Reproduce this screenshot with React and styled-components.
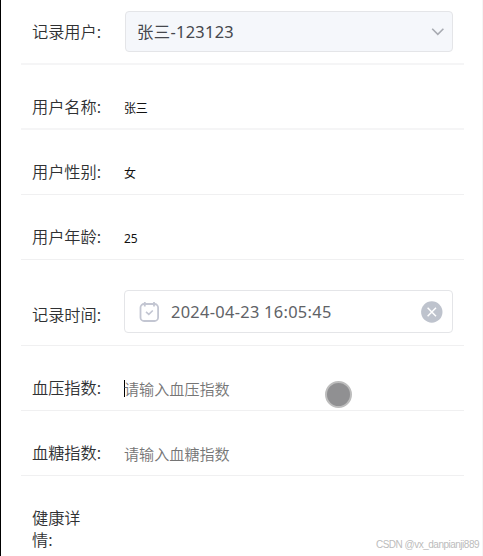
import React from "react";

import styled, { createGlobalStyle } from "styled-components";

const GlobalStyle = createGlobalStyle`
  body {
    margin: 0;
    background-color: #fff;
  }
`;

const Page = styled.div`
  position: relative;
  box-sizing: border-box;
  width: 483px;
  height: 556px;
  overflow: hidden;
  border-left: 1px solid #000;
  border-right: 1px solid #f5f5f5;
  padding: 0 18px 0 20px;
  background-color: #fff;
  font-family: "Noto Sans", "Noto Sans CJK SC", sans-serif;
`;

const Row = styled.div`
  box-sizing: border-box;
  display: flex;
  align-items: flex-start;
  height: ${(props) => props.$height}px;
  padding-left: 11px;
  border-bottom: ${(props) => (props.$soft ? "2px solid #f5f5f6" : "1px solid #f0f0f1")};

  &:last-child {
    border-bottom: none;
  }
`;

const Label = styled.div`
  flex: none;
  width: ${(props) => (props.$narrow ? 56 : 80)}px;
  margin-top: ${(props) => props.$top || 30}px;
  margin-right: 12px;
  font-family: "Noto Sans CJK SC", sans-serif;
  font-weight: 350;
  font-size: 16.2px;
  line-height: 22px;
  color: #303133;
`;

const Value = styled.div`
  margin-top: 36px;
  font-size: 12px;
  line-height: 16px;
  letter-spacing: -0.2px;
  color: #111;
`;

const Field = styled.div`
  box-sizing: border-box;
  display: flex;
  align-items: center;
  width: ${(props) => (props.$filled ? 328 : 329)}px;
  height: ${(props) => (props.$filled ? 41 : 43)}px;
  margin-top: ${(props) => (props.$filled ? 11 : 30)}px;
  margin-left: ${(props) => (props.$filled ? 1 : 0)}px;
  padding: ${(props) => (props.$filled ? "0 7px 0 11px" : "0 9px 0 14px")};
  border: 1px solid #e4e5e8;
  border-radius: 4px;
  background-color: ${(props) => (props.$filled ? "#f5f7fb" : "#fff")};
`;

const FieldText = styled.span`
  flex: 1;
  font-size: 16.4px;
  line-height: 22px;
  letter-spacing: 0.3px;
  color: ${(props) => props.$color};
`;

const CalendarIcon = styled.svg`
  flex: none;
  width: 22px;
  height: 22px;
  margin-right: 10px;
`;

const Input = styled.div`
  display: flex;
  align-items: center;
  height: 18px;
  margin-top: 33px;
  font-family: "Noto Sans CJK SC", sans-serif;
  font-weight: 350;
  font-size: 15.1px;
  line-height: 18px;
  color: #757575;
`;

const Caret = styled.span`
  width: 1px;
  height: 17px;
  margin-right: -1px;
  background-color: #000;
`;

const Pointer = styled.div`
  position: absolute;
  left: 324px;
  top: 381px;
  box-sizing: border-box;
  width: 27px;
  height: 27px;
  border: 2px solid #bdbdbd;
  border-radius: 50%;
  background-color: #909092;
`;

const Watermark = styled.div`
  position: absolute;
  right: 3px;
  top: 538px;
  font-family: "Liberation Sans", sans-serif;
  font-size: 10px;
  line-height: 14px;
  letter-spacing: -0.5px;
  white-space: nowrap;
  color: #bcbcbc;
`;

const SelectField = ({ value }) => (
  <Field $filled>
    <FieldText $color="#45474d">{value}</FieldText>
    <svg width="14" height="14" viewBox="0 0 14 14" fill="none">
      <path d="M1.2 3.8L6.8 9.4l5.6-5.6" stroke="#a8abb2" strokeWidth="1.6" />
    </svg>
  </Field>
);

const DateField = ({ value }) => (
  <Field>
    <CalendarIcon viewBox="0 0 22 22" fill="none" stroke="#c3c6d2" strokeWidth="1.8">
      <rect x="1.5" y="3" width="17.6" height="17" rx="3.6" />
      <path d="M5.8 1v4.4M15 1v4.4" />
      <path d="M7 10.8l2.8 2.5 4-3.8" strokeWidth="1.6" />
    </CalendarIcon>
    <FieldText $color="#606266">{value}</FieldText>
    <svg width="22" height="22" viewBox="0 0 22 22" fill="none">
      <circle cx="10.8" cy="11" r="10.7" fill="#bec3cd" />
      <path d="M6.6 6.8l8.4 8.4M15 6.8l-8.4 8.4" stroke="#fff" strokeWidth="1.5" />
    </svg>
  </Field>
);

const App = () => {
  return (
    <Page>
      <GlobalStyle />
      <div>
        <Row $height={65} $soft>
          <Label $top={20}>记录用户:</Label>
          <SelectField value="张三-123123" />
        </Row>
        <Row $height={65} $soft>
          <Label>用户名称:</Label>
          <Value>张三</Value>
        </Row>
        <Row $height={65}>
          <Label>用户性别:</Label>
          <Value>女</Value>
        </Row>
        <Row $height={65}>
          <Label>用户年龄:</Label>
          <Value>25</Value>
        </Row>
        <Row $height={86}>
          <Label $top={43}>记录时间:</Label>
          <DateField value="2024-04-23 16:05:45" />
        </Row>
        <Row $height={65}>
          <Label>血压指数:</Label>
          <Input>
            <Caret />
            请输入血压指数
          </Input>
        </Row>
        <Row $height={65}>
          <Label>血糖指数:</Label>
          <Input>请输入血糖指数</Input>
        </Row>
        <Row $height={80}>
          <Label $narrow>健康详情:</Label>
        </Row>
      </div>
      <Pointer />
      <Watermark>CSDN @vx_danpianji889</Watermark>
    </Page>
  );
};

export default App;
